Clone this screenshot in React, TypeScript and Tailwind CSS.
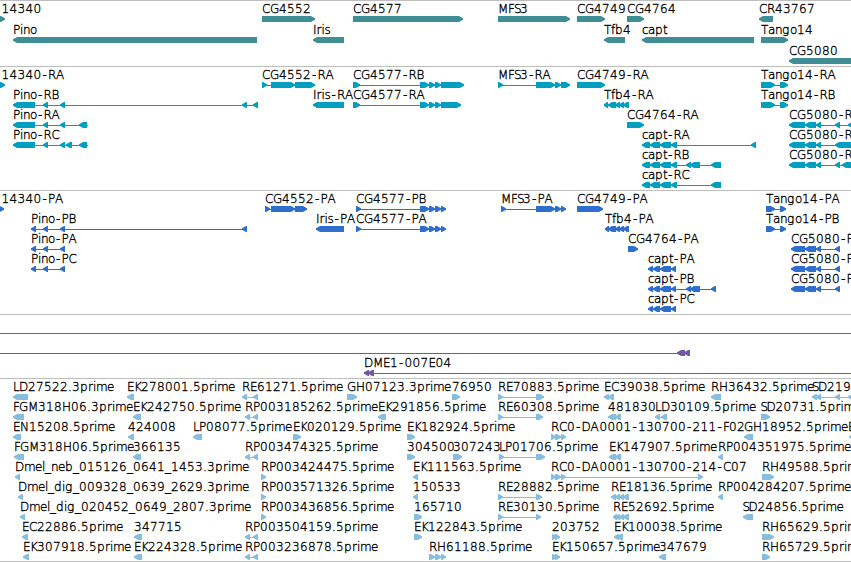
type Strand = "+" | "-";
type Span = [number, number];

interface Feature {
  label?: string;
  x: number;
  strand: Strand;
  spans: Span[];
  /** intron line extent, defaults to first/last span */
  line?: Span;
}

interface Track {
  name: string;
  fill: string;
  stroke: string;
  height: string;
  rowHeight: number;
  rows: Feature[][];
}

const WIDTH = 851;
const HEAD = 5;

// advance of each label character in px, anything missing is a digit (8)
const ADVANCE: Record<string, number> = {
  A: 9, B: 7, C: 8, D: 9, E: 7, F: 6, G: 9, H: 9, I: 3.5, K: 7, L: 6, M: 10, N: 9, P: 7, R: 8, S: 6, T: 7,
  a: 7, b: 8, c: 6, e: 7, f: 4, g: 8, i: 3, l: 3, m: 11, n: 7, o: 7, p: 8, r: 5, s: 6, t: 4,
  "-": 6.5, "_": 6, ".": 4,
};

const fwd = (label: string, x: number, ...spans: Span[]): Feature => ({ label, x, strand: "+", spans });
const rev = (label: string, x: number, ...spans: Span[]): Feature => ({ label, x, strand: "-", spans });

// exons shared between isoforms
const capt: Span[] = [[642, 650], [650, 660], [660, 671], [671, 677]];
const captCds: Span[] = [[648, 653], [653, 660], [660, 671], [671, 676]];
const cg5080: Span[] = [[789, 805], [805, 816], [816, 821]];
const cg5080Cds: Span[] = [[791, 805], [805, 816], [816, 821], [835, 840]];
const cg4577Cds: Span[] = [[356, 361], [420, 429], [429, 435], [435, 441], [441, 446]];
const rp: Span[] = [[245, 250], [253, 258]];

const genes: Feature[][] = [
  [
    fwd("14340", 1.5, [-10, 5]),
    fwd("CG4552", 262, [262, 315]),
    fwd("CG4577", 353, [353, 463]),
    fwd("MFS3", 498, [498, 570]),
    fwd("CG4749", 577, [577, 605]),
    fwd("CG4764", 627, [627, 644]),
    rev("CR43767", 759, [759, 773]),
  ],
  [
    rev("Pino", 13, [13, 257]),
    rev("Iris", 313, [313, 344]),
    rev("Tfb4", 604, [604, 625]),
    rev("capt", 642, [642, 754]),
    fwd("Tango14", 761, [761, 788]),
  ],
  [rev("CG5080", 789, [789, 870])],
];

const transcripts: Feature[][] = [
  [
    fwd("14340-RA", 1.5, [-10, 5]),
    fwd("CG4552-RA", 262, [262, 267], [271, 295], [295, 315]),
    fwd("CG4577-RB", 353, [353, 360], [420, 429], [429, 435], [435, 441], [441, 464]),
    fwd("MFS3-RA", 498, [498, 503], [536, 555], [555, 561], [561, 570]),
    fwd("CG4749-RA", 577, [577, 605]),
    fwd("Tango14-RA", 761, [761, 775], [780, 788]),
  ],
  [
    rev("Pino-RB", 13, [13, 35], [43, 48], [60, 65], [242, 247], [253, 258]),
    rev("Iris-RA", 313, [313, 344]),
    fwd("CG4577-RA", 353, [353, 360], [420, 429], [429, 435], [435, 441], [441, 461]),
    rev("Tfb4-RA", 604, [604, 608], [608, 616], [615, 620], [619, 624], [623, 629]),
    fwd("Tango14-RB", 761, [761, 765], [763, 775], [780, 788]),
  ],
  [
    { ...rev("Pino-RA", 13, [13, 35], [43, 48], [60, 65], [79, 87]), line: [13, 88] },
    fwd("CG4764-RA", 627, [627, 644]),
    rev("CG5080-R", 789, ...cg5080, [835, 840], [848, 870]),
  ],
  [
    { ...rev("Pino-RC", 13, [13, 35], [43, 48], [60, 65], [66, 72], [79, 87]), line: [13, 88] },
    rev("capt-RA", 642, ...capt, [751, 756]),
    rev("CG5080-R", 789, ...cg5080, [835, 870]),
  ],
  [
    rev("capt-RB", 642, ...capt, [686, 691], [690, 700], [711, 721]),
    rev("CG5080-R", 789, ...cg5080, [835, 840], [842, 870]),
  ],
  [rev("capt-RC", 642, ...capt, [711, 721])],
];

const proteins: Feature[][] = [
  [
    fwd("14340-PA", 1.5, [-10, 4]),
    fwd("CG4552-PA", 265, [265, 270], [271, 295], [295, 307]),
    fwd("CG4577-PB", 356, ...cg4577Cds),
    fwd("MFS3-PA", 501, [501, 506], [536, 555], [555, 561], [561, 566]),
    fwd("CG4749-PA", 577, [577, 603]),
    fwd("Tango14-PA", 766, [766, 775], [780, 786]),
  ],
  [
    rev("Pino-PB", 31, [31, 36], [43, 48], [60, 65], [242, 247]),
    rev("Iris-PA", 316, [316, 344]),
    fwd("CG4577-PA", 356, ...cg4577Cds),
    rev("Tfb4-PA", 605, [605, 609], [608, 616], [615, 620], [619, 624], [623, 629]),
    fwd("Tango14-PB", 766, [766, 775], [780, 786]),
  ],
  [
    rev("Pino-PA", 31, [31, 36], [43, 48], [60, 65]),
    fwd("CG4764-PA", 628, [628, 638]),
    rev("CG5080-P", 791, ...cg5080Cds),
  ],
  [
    rev("Pino-PC", 31, [31, 36], [43, 48], [60, 65]),
    rev("capt-PA", 648, ...captCds),
    rev("CG5080-P", 791, ...cg5080Cds),
  ],
  [
    rev("capt-PB", 648, ...captCds, [686, 691], [690, 700], [711, 716]),
    rev("CG5080-P", 791, ...cg5080Cds),
  ],
  [rev("capt-PC", 648, ...captCds)],
];

const clones: Feature[][] = [
  [{ x: 0, strand: "+", spans: [], line: [0, WIDTH] }],
  [{ x: 0, strand: "-", spans: [[677, 685], [684, 690]], line: [0, 690] }],
  [{ ...rev("DME1-007E04", 364, [364, 369], [368, 374]), line: [364, WIDTH] }],
];

const ests: Feature[][] = [
  [
    rev("LD27522.3prime", 13, [13, 28]),
    rev("EK278001.5prime", 127, [127, 134]),
    rev("RE61271.5prime", 242, [242, 247], [253, 258]),
    fwd("GH07123.3prime", 347, [347, 357]),
    fwd("76950", 452, [452, 460]),
    fwd("RE70883.5prime", 498, [498, 503], [536, 544]),
    rev("EC39038.5prime", 604, [604, 609], [608, 614]),
    rev("RH36432.5prime", 711, [711, 721]),
    rev("SD219", 812, [812, 817], [816, 821], [835, 840], [848, 860]),
  ],
  [
    rev("FGM318H06.3prime", 13, [13, 24]),
    rev("EK242750.5prime", 133, [133, 141]),
    rev("RP003185262.5prime", 245, ...rp),
    rev("EK291856.5prime", 378, [378, 386]),
    fwd("RE60308.5prime", 498, [498, 503], [536, 543]),
    rev("481830", 608, [608, 616], [615, 621]),
    rev("LD30109.5prime", 655, [655, 660], [661, 667]),
    fwd("SD20731.5prime", 760.5, [761, 770]),
  ],
  [
    rev("EN15208.5prime", 13, [13, 21]),
    rev("424008", 128, [128, 134]),
    rev("LP08077.5prime", 193, [193, 202]),
    fwd("EK020129.5prime", 293, [293, 301]),
    fwd("EK182924.5prime", 407, [407, 415]),
    fwd("RC0-DA0001-130700-211-F02", 551, [551, 556], [555, 561], [561, 566]),
    rev("GH18952.5prime", 744, [744, 753]),
    rev("E", 848, [849, 860]),
  ],
  [
    rev("FGM318H06.5prime", 14, [14, 24]),
    rev("366135", 133, [133, 141]),
    rev("RP003474325.5prime", 245, ...rp),
    fwd("304500", 407, [407, 415]),
    fwd("307243", 453, [453, 462]),
    fwd("LP01706.5prime", 499, [499, 504], [536, 545]),
    rev("EK147907.5prime", 609, [609, 616], [615, 621]),
    rev("RP004351975.5prime", 718, [718, 723]),
  ],
  [
    rev("Dmel_neb_015126_0641_1453.3prime", 15, [15, 20]),
    fwd("RP003424475.5prime", 261, [261, 266]),
    rev("EK111563.5prime", 413, [413, 418]),
    fwd("RC0-DA0001-130700-214-C07", 551, [551, 556], [555, 561], [561, 566], [698, 703]),
    fwd("RH49588.5prime", 762, [762, 774]),
  ],
  [
    rev("Dmel_dig_009328_0639_2629.3prime", 18, [18, 23]),
    fwd("RP003571326.5prime", 261, [261, 266]),
    rev("150533", 413, [413, 418]),
    fwd("RE28882.5prime", 498, [498, 503], [536, 542]),
    rev("RE18136.5prime", 611, [611, 616], [615, 620], [619, 624], [623, 629]),
    rev("RP004284207.5prime", 718, [718, 723]),
  ],
  [
    rev("Dmel_dig_020452_0649_2807.3prime", 20, [20, 25]),
    fwd("RP003436856.5prime", 261, [261, 266]),
    fwd("165710", 414, [414, 422]),
    fwd("RE30130.5prime", 498, [498, 503], [536, 541]),
    rev("RE52692.5prime", 613, [613, 617], [616, 620], [619, 624], [623, 629]),
    rev("SD24856.5prime", 742.5, [743, 753]),
  ],
  [
    rev("EC22886.5prime", 22, [22, 28]),
    rev("347715", 134, [134, 142]),
    rev("RP003504159.5prime", 245, ...rp),
    fwd("EK122843.5prime", 414, [414, 422]),
    fwd("203752", 552, [552, 557], [555, 560]),
    rev("EK100038.5prime", 614, [614, 619], [617, 623]),
    fwd("RH65629.5prime", 762, [762, 774]),
  ],
  [
    rev("EK307918.5prime", 23, [23, 29]),
    rev("EK224328.5prime", 134, [134, 142]),
    rev("RP003236878.5prime", 245, ...rp),
    fwd("RH61188.5prime", 429, [429, 435], [435, 441], [441, 446]),
    fwd("EK150657.5prime", 552, [552, 557], [555, 560]),
    rev("347679", 659, [659, 666]),
    fwd("RH65729.5prime", 762, [762, 770]),
  ],
];

const TRACKS: Track[] = [
  { name: "genes", fill: "fill-[#3f8e95]", stroke: "stroke-[#3f8e95]", height: "h-[66px]", rowHeight: 21, rows: genes },
  { name: "transcripts", fill: "fill-[#009fc0]", stroke: "stroke-[#009fc0]", height: "h-[124px]", rowHeight: 20, rows: transcripts },
  { name: "proteins", fill: "fill-[#2f6ecc]", stroke: "stroke-[#2f6ecc]", height: "h-[124px]", rowHeight: 20, rows: proteins },
  { name: "clones", fill: "fill-[#7358a8]", stroke: "stroke-[#7358a8]", height: "h-[64px]", rowHeight: 20, rows: clones },
  { name: "ests", fill: "fill-[#87bddd]", stroke: "stroke-[#87bddd]", height: "h-[183px]", rowHeight: 20, rows: ests },
];

function arrow([start, end]: Span, strand: Strand) {
  const head = Math.min(HEAD, end - start);
  return strand === "+"
    ? `M${start} 15H${end - head + 1}L${end} 17.3V18.7L${end - head + 1} 21H${start}Z`
    : `M${end} 15H${start + head - 1}L${start} 17.3V18.7L${start + head - 1} 21H${end}Z`;
}

function charPositions(label: string, x: number) {
  let pos = x;
  return [...label].map((ch) => {
    // the hyphen sits in the middle of its cell
    const at = ch === "-" ? pos + 1 : pos;
    pos += ADVANCE[ch] ?? 8;
    return at;
  });
}

function Glyph({ feature, fill, stroke }: { feature: Feature; fill: string; stroke: string }) {
  const { label, x, strand, spans } = feature;
  const line = feature.line ?? [spans[0][0], spans[spans.length - 1][1]];
  const hasLine = spans.length !== 1;
  return (
    <g>
      {hasLine && <line x1={line[0]} x2={line[1]} y1={18.5} y2={18.5} className={stroke} />}
      {spans.map((s, i) => (
        <path key={i} d={arrow(s, strand)} className={fill} />
      ))}
      {label && (
        <text x={charPositions(label, x).join(" ")} y={12} className="fill-black stroke-black stroke-[0.35px] text-[12px] font-extralight">
          {label}
        </text>
      )}
    </g>
  );
}

function TrackPanel({ track }: { track: Track }) {
  return (
    <section className={`flex flex-col border-t border-[#bebebe] ${track.height}`}>
      {track.rows.map((row, i) => (
        <svg key={i} width={WIDTH} height={track.rowHeight} className="block shrink-0 overflow-visible">
          {row.map((f, j) => (
            <Glyph key={j} feature={f} fill={track.fill} stroke={track.stroke} />
          ))}
        </svg>
      ))}
    </section>
  );
}

export default function App() {
  return (
    <main className="flex h-[562px] w-[851px] flex-col overflow-hidden border-b border-[#bebebe] bg-white font-['DejaVu_Sans',sans-serif]">
      {TRACKS.map((t) => (
        <TrackPanel key={t.name} track={t} />
      ))}
    </main>
  );
}
